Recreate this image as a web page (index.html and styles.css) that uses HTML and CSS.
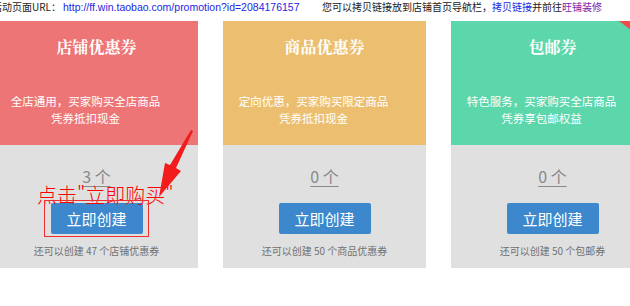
FILE: index.html
```html
<!DOCTYPE html>
<html lang="zh-CN">
<head>
<meta charset="utf-8">
<link rel="stylesheet" href="styles.css">
</head>
<body>
<div class="page">
  <div class="topbar">
    <div class="url-line"><span class="label">活动页面URL：</span><a class="link">http://ff.win.taobao.com/promotion?id=2084176157</a></div>
    <div class="tip">您可以拷贝链接放到店铺首页导航栏，<a class="link-cn">拷贝链接</a>并前往<a class="visited">旺铺装修</a></div>
  </div>
  <div class="cards">
    <div class="card red">
      <div class="head">
        <div class="title">店铺优惠券</div>
        <div class="desc">全店通用，买家购买全店商品<br>凭券抵扣现金</div>
      </div>
      <div class="foot">
        <div class="count">3 个</div>
        <button class="btn">立即创建</button>
        <div class="remain">还可以创建 47 个店铺优惠券</div>
      </div>
    </div>
    <div class="card orange">
      <div class="head">
        <div class="title">商品优惠券</div>
        <div class="desc">定向优惠，买家购买限定商品<br>凭券抵扣现金</div>
      </div>
      <div class="foot">
        <div class="count">0 个</div>
        <button class="btn">立即创建</button>
        <div class="remain">还可以创建 50 个商品优惠券</div>
      </div>
    </div>
    <div class="card green">
      <span class="corner"></span>
      <div class="head">
        <div class="title">包邮券</div>
        <div class="desc">特色服务，买家购买全店商品<br>凭券享包邮权益</div>
      </div>
      <div class="foot">
        <div class="count">0 个</div>
        <button class="btn">立即创建</button>
        <div class="remain">还可以创建 50 个包邮券</div>
      </div>
    </div>
  </div>
  <span class="note">点击"立即购买"</span>
  <span class="note-box"></span>
  <svg class="arrow" width="630" height="306" viewBox="0 0 630 306">
    <polygon points="191,130 193,131 176,168 181,171 159,197 165,163 170,165" fill="#f21c1c"/>
  </svg>
</div>
</body>
</html>
```
FILE: styles.css
```css
html, body {
  margin: 0;
  padding: 0;
  background: #fff;
}
body {
  width: 630px;
  height: 306px;
  overflow: hidden;
  font-family: "Noto Sans CJK SC", "Liberation Sans", sans-serif;
}
.page {
  position: relative;
  width: 630px;
  height: 306px;
}
.topbar {
  display: flex;
  height: 14px;
  line-height: 14px;
  font-size: 10px;
  color: #222;
  white-space: nowrap;
}
.url-line {
  flex: 0 0 330px;
  margin-left: -8px;
  width: 330px;
}
.label {
  margin-right: 2px;
}
.link {
  color: #2525e0;
  font-family: "Liberation Sans", sans-serif;
  font-size: 10.5px;
}
.link-cn {
  color: #2525e0;
}
.visited {
  color: #7a1fa8;
}
.cards {
  display: flex;
  gap: 25px;
  margin-top: 7px;
  margin-left: -5px;
}
.card {
  position: relative;
  flex: 0 0 203px;
  width: 203px;
  overflow: hidden;
}
.head {
  height: 124px;
  box-sizing: border-box;
  padding-top: 16px;
  text-align: center;
  color: #fff;
}
.red .head { background: #ed7575; }
.orange .head { background: #ecbf70; }
.green .head { background: #5cd6ab; }
.title {
  font-family: "Noto Serif CJK SC", "Noto Sans CJK SC", serif;
  font-weight: bold;
  font-size: 16px;
  line-height: 20px;
}
.desc {
  margin-top: 36px;
  padding-right: 22px;
  font-size: 11.5px;
  line-height: 17px;
}
.foot {
  background: #e0e0e0;
  height: 123px;
  box-sizing: border-box;
  padding-top: 21px;
  display: flex;
  flex-direction: column;
  align-items: center;
}
.count {
  font-size: 16px;
  line-height: 20px;
  color: #8a8a8a;
  text-decoration: underline;
  text-underline-offset: 3px;
}
.btn {
  margin-top: 17px;
  width: 92px;
  height: 31px;
  border: 0;
  border-radius: 2px;
  background: #3d88cc;
  color: #fff;
  font-family: "Noto Sans CJK SC", sans-serif;
  font-size: 15px;
  padding: 0;
}
.remain {
  margin-top: 9px;
  font-size: 10px;
  line-height: 16px;
  color: #707070;
}
.corner {
  position: absolute;
  top: 0;
  right: 19px;
  width: 0;
  height: 0;
  border-top: 12px solid #f04a4a;
  border-left: 16px solid transparent;
}
.note {
  position: absolute;
  left: 37px;
  top: 183px;
  font-size: 20px;
  line-height: 24px;
  color: #f00;
  white-space: nowrap;
  font-family: "Noto Sans CJK SC", sans-serif;
  font-weight: 300;
}
.note-box {
  position: absolute;
  left: 44px;
  top: 200px;
  width: 105px;
  height: 37px;
  border: 1px solid #f03030;
  box-sizing: border-box;
}
.arrow {
  position: absolute;
  left: 0;
  top: 0;
  pointer-events: none;
}
```
